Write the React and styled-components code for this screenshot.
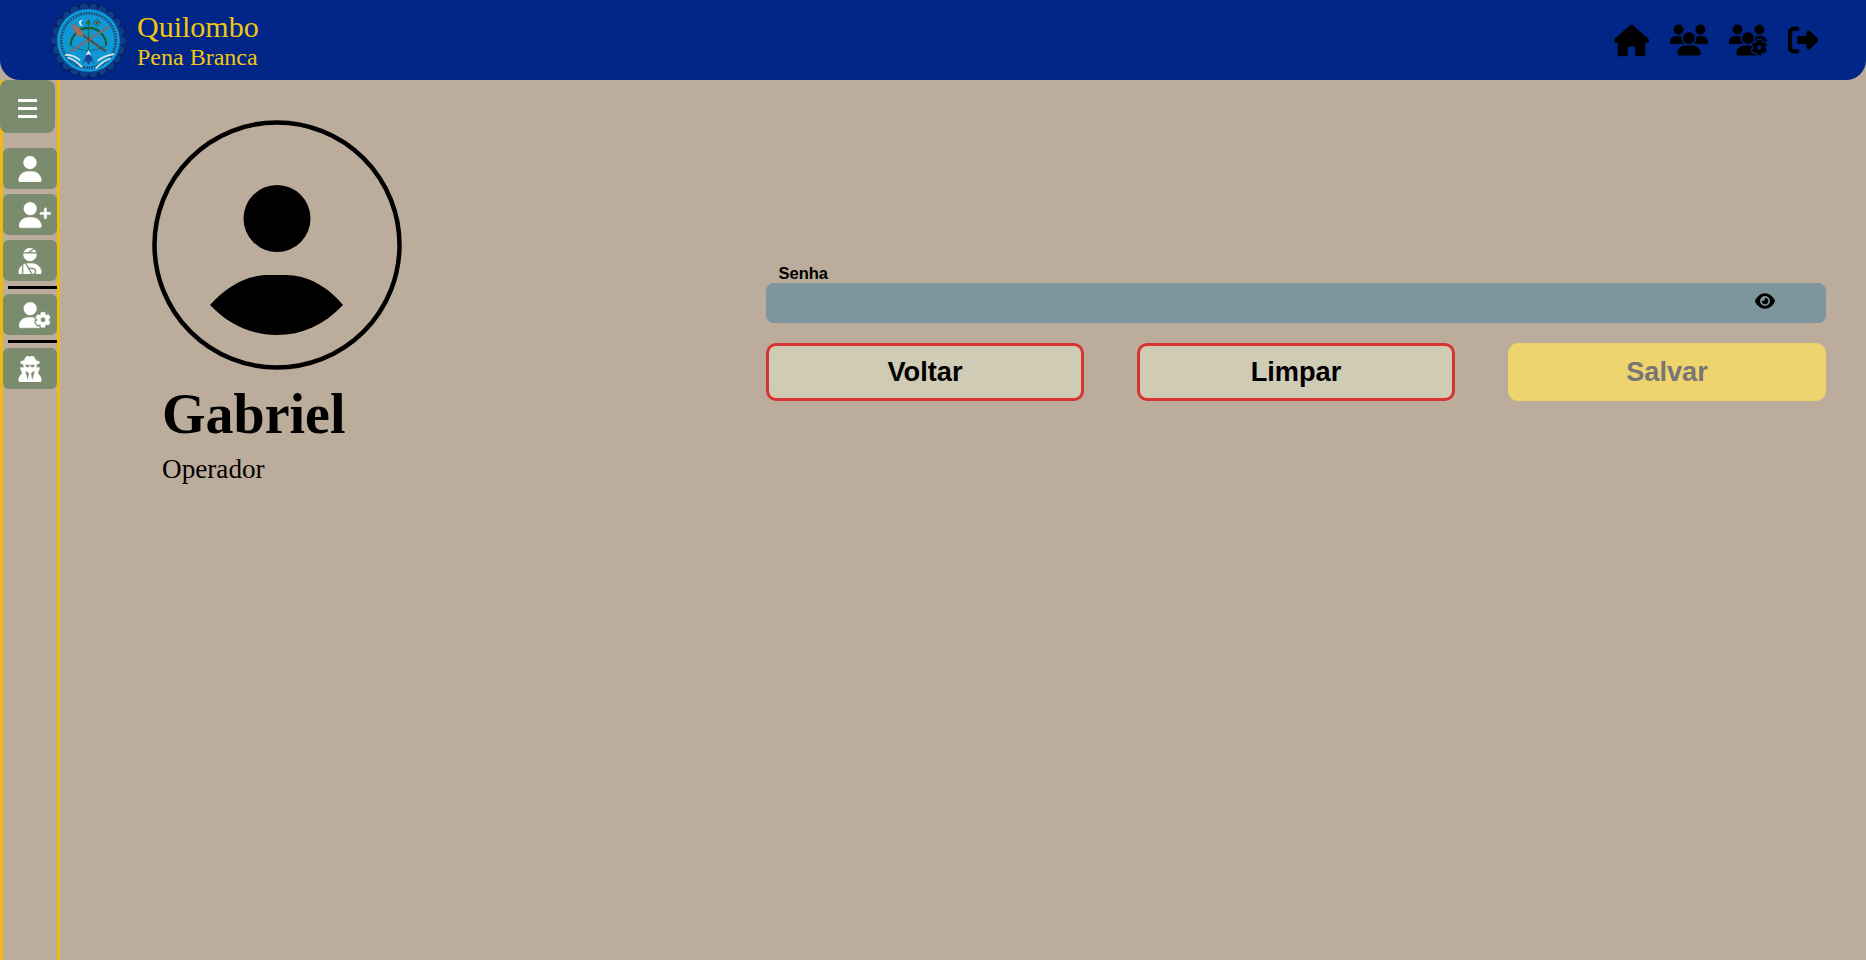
import React from "react";
import styled, { createGlobalStyle } from "styled-components";
import { FaHouse, FaUsers, FaUsersGear, FaRightFromBracket, FaUser, FaUserPlus, FaUserInjured, FaUserGear, FaUserSecret, FaEye } from "react-icons/fa6";

const Global = createGlobalStyle`
  * { box-sizing: border-box; }
  html, body { margin: 0; height: 100%; background: #bcac9b; overflow: hidden; }
  #root { height: 100%; }
`;

const Page = styled.div`
  height: 960px;
  display: flex;
  flex-direction: column;
  background: #bcac9b;
`;

const Header = styled.header`
  height: 80px;
  flex: none;
  background: #012687;
  border-radius: 0 0 20px 20px;
  display: flex;
  align-items: center;
  justify-content: space-between;
  padding: 0 48px 0 51px;
`;

const Brand = styled.div`
  display: flex;
  align-items: center;
  gap: 11px;
`;

const BrandText = styled.div`
  display: flex;
  flex-direction: column;
  font-family: "Liberation Serif", serif;
  color: #f2c511;
`;

const BrandTitle = styled.span`
  font-size: 30px;
  line-height: 34px;
`;

const BrandSub = styled.span`
  font-size: 24px;
  line-height: 26px;
`;

const Nav = styled.nav`
  display: flex;
  align-items: center;
  gap: 21px;
  color: #000;
  svg { display: block; stroke-width: 8px; }
`;

const Body = styled.div`
  flex: 1;
  display: flex;
  min-height: 0;
`;

const Sidebar = styled.aside`
  width: 60px;
  flex: none;
  border-left: 3px solid #ebbc0c;
  border-right: 3px solid #ebbc0c;
  display: flex;
  flex-direction: column;
`;

const MenuButton = styled.button`
  width: 55px;
  height: 53px;
  margin-left: -3px;
  margin-bottom: 15px;
  padding: 4px 0 0;
  border: 0;
  border-radius: 8px;
  background: #7a8c6d;
  display: flex;
  flex-direction: column;
  align-items: center;
  justify-content: center;
  gap: 5.500px;
`;

const MenuLine = styled.span`
  display: block;
  width: 19px;
  height: 2.500px;
  background: #fff;
`;

const SideButton = styled.button`
  width: 54px;
  height: 41px;
  flex: none;
  padding: 0 0 0 ${(p) => (p.$wide ? "9px" : "0")};
  border: 0;
  border-radius: 6px;
  background: #7a8c6d;
  color: #fff;
  display: flex;
  align-items: center;
  justify-content: center;
  margin-bottom: 5px;
  svg { display: block; stroke-width: 8px; }
`;

const Divider = styled.hr`
  width: 49px;
  height: 3px;
  margin: 0 0 5px 5px;
  border: 0;
  background: #000;
`;

const Content = styled.main`
  flex: 1;
  display: flex;
  min-width: 0;
`;

const Profile = styled.section`
  width: 706px;
  flex: none;
  padding: 40px 0 0 92px;
  display: flex;
  flex-direction: column;
  font-family: "Liberation Serif", serif;
  color: #000;
`;

const Avatar = styled.svg`
  display: block;
  margin-bottom: 12px;
`;

const Name = styled.h1`
  margin: 0 0 0 10px;
  font-size: 56px;
  line-height: 64px;
  font-weight: 700;
`;

const Role = styled.p`
  margin: 8px 0 0 10px;
  font-size: 27.2px;
  line-height: 31px;
`;

const Form = styled.section`
  flex: 1;
  padding: 185px 40px 0 0;
  font-family: "Liberation Sans", sans-serif;
`;

const Label = styled.label`
  display: block;
  margin-left: 12.500px;
  height: 18px;
  font-size: 16.500px;
  line-height: 17px;
  font-weight: 700;
  color: #000;
`;

const Field = styled.div`
  height: 40px;
  border-radius: 8px;
  background: #7d959d;
  display: flex;
  justify-content: flex-end;
  padding: 8px 51px 0 0;
  color: #000;
  svg { display: block; }
`;

const Actions = styled.div`
  margin-top: 20px;
  display: grid;
  grid-template-columns: repeat(3, 318px);
  justify-content: space-between;
`;

const ActionButton = styled.button`
  height: 58px;
  border-radius: 10px;
  border: ${(p) => (p.disabled ? "0" : "3px solid #d63333")};
  background: ${(p) => (p.disabled ? "#edd46f" : "#cfcbb5")};
  color: ${(p) => (p.disabled ? "#7a7474" : "#000")};
  font-family: "Liberation Sans", sans-serif;
  font-size: 27.200px;
  font-weight: 700;
  padding: 0;
`;

function Logo() {
  const n = 22;
  const scallops = Array.from({ length: n }, (_, i) => {
    const a = (i / n) * Math.PI * 2;
    return <circle key={i} cx={145 + 97 * Math.cos(a)} cy={120 + 97 * Math.sin(a)} r="14" />;
  });
  return (
    <svg width="75" height="75" viewBox="35 10 220 220" aria-hidden="true">
      <g fill="#0e3f86" stroke="#0a1c5c" strokeWidth="3">{scallops}</g>
      <circle cx="145" cy="120" r="97" fill="#0e3f86" />
      <circle cx="145" cy="120" r="92" fill="#0d9cdb" />
      <circle cx="145" cy="120" r="80" fill="none" stroke="#23507a" strokeWidth="9" strokeDasharray="5 3" />
      <circle cx="145" cy="120" r="72" fill="#0e98d4" />
      <path d="M93 135A52 52 0 0 1 197 135" fill="none" stroke="#1f5a2e" strokeWidth="6" />
      <path d="M93 135Q145 165 197 135" fill="none" stroke="#1c4b5c" strokeWidth="2" />
      <path d="M145 150V68" stroke="#2c6a35" strokeWidth="4" />
      <path d="M145 57l-8 15h16z" fill="#2c6a35" />
      <path d="M205 80L92 152" stroke="#6d7078" strokeWidth="7" />
      <path d="M125 102L196 152" stroke="#5f4a3d" strokeWidth="6" />
      <path d="M96 71C115 78 128 90 130 106L117 108C106 98 99 86 96 71Z" fill="#a8694f" />
      <circle cx="170" cy="68" r="5" fill="#f2c511" />
      <path d="M170 56V80M158 68H182M162 60L178 76M178 60L162 76" stroke="#15304e" strokeWidth="2" />
      <path d="M130 60A9 9 0 1 0 130 76A7 8 0 1 1 130 60Z" fill="#e8eef2" />
      <path d="M145 148L127 190L137 178L145 192L153 178L163 190Z" fill="#1e3f94" />
      <path d="M145 148L137 164L145 160L153 164Z" fill="#eef2f5" />
      <path d="M76 162Q105 162 120 178M84 170Q105 176 126 198" fill="none" stroke="#dfe7e6" strokeWidth="5" />
      <path d="M220 160Q190 164 172 180M210 172Q188 180 166 202" fill="none" stroke="#dfe7e6" strokeWidth="5" />
    </svg>
  );
}

export default function App() {
  return (
    <Page>
      <Global />
      <Header>
        <Brand>
          <Logo />
          <BrandText>
            <BrandTitle>Quilombo</BrandTitle>
            <BrandSub>Pena Branca</BrandSub>
          </BrandText>
        </Brand>
        <Nav>
          <FaHouse size={35} />
          <FaUsers size={38} />
          <FaUsersGear size={38} />
          <FaRightFromBracket size={30} />
        </Nav>
      </Header>
      <Body>
        <Sidebar>
          <MenuButton aria-label="Menu">
            <MenuLine />
            <MenuLine />
            <MenuLine />
          </MenuButton>
          <SideButton><FaUser size={26} /></SideButton>
          <SideButton $wide><FaUserPlus size={32} /></SideButton>
          <SideButton><FaUserInjured size={26} /></SideButton>
          <Divider />
          <SideButton $wide><FaUserGear size={32} /></SideButton>
          <Divider />
          <SideButton><FaUserSecret size={26} /></SideButton>
        </Sidebar>
        <Content>
          <Profile>
            <Avatar width="250" height="250" viewBox="0 0 250 250" aria-hidden="true">
              <circle cx="125" cy="125" r="122.5" fill="none" stroke="#000" strokeWidth="4.500" />
              <circle cx="125" cy="98.500" r="33.500" fill="#000" />
              <path d="M58 185C75 166 95 155 116 155H134C155 155 175 166 191 185C172 205 150 215 125 215C100 215 77 205 58 185Z" fill="#000" />
            </Avatar>
            <Name>Gabriel</Name>
            <Role>Operador</Role>
          </Profile>
          <Form>
            <Label>Senha</Label>
            <Field><FaEye size={20} /></Field>
            <Actions>
              <ActionButton>Voltar</ActionButton>
              <ActionButton>Limpar</ActionButton>
              <ActionButton disabled>Salvar</ActionButton>
            </Actions>
          </Form>
        </Content>
      </Body>
    </Page>
  );
}
